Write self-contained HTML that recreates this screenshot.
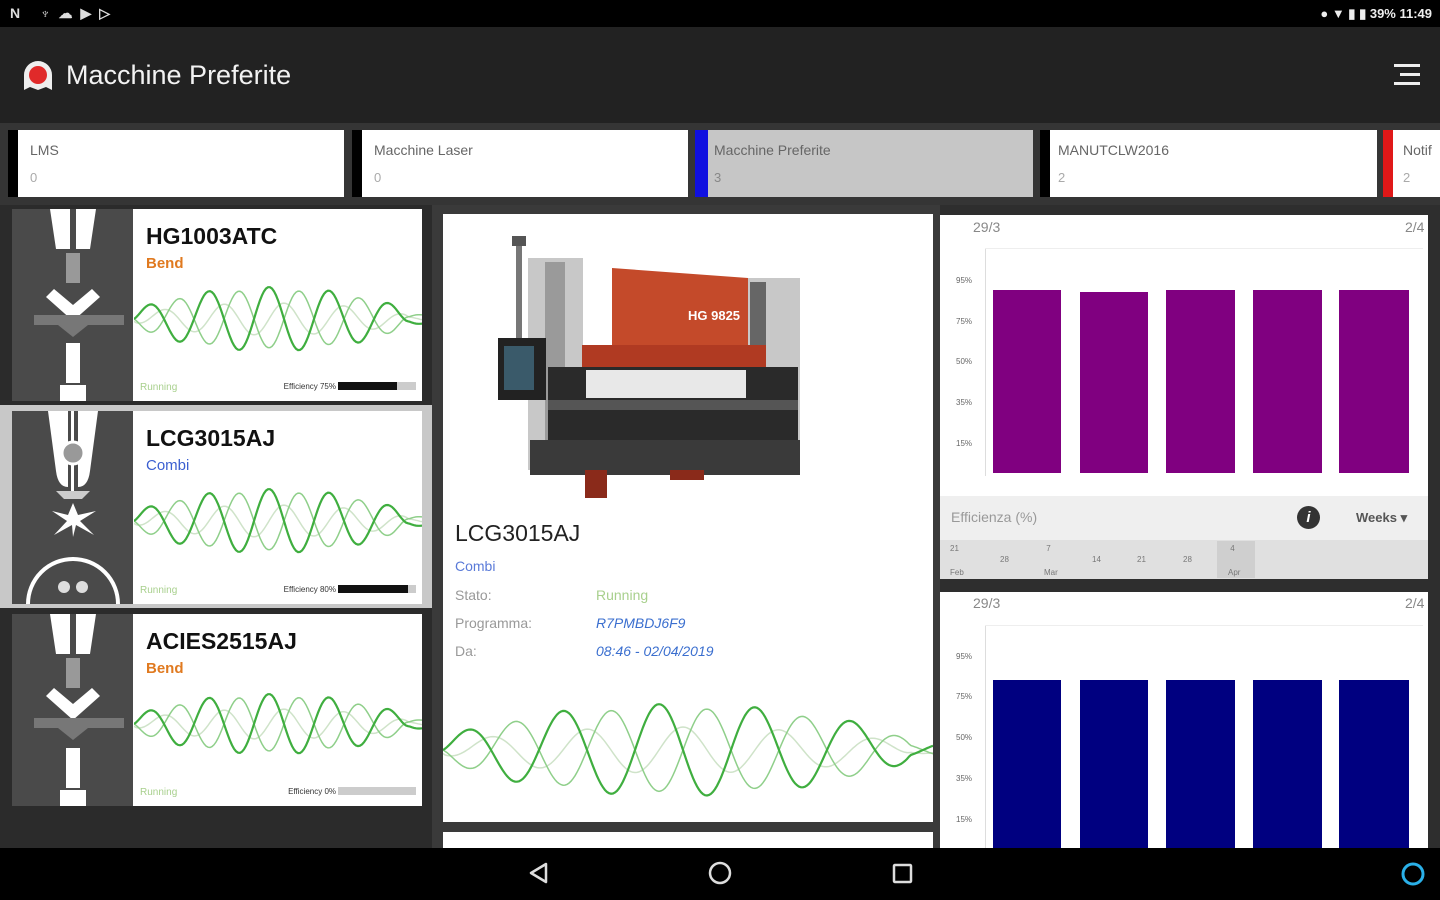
<!DOCTYPE html>
<html><head><meta charset="utf-8"><style>
*{margin:0;padding:0;box-sizing:border-box}
body{width:1440px;height:900px;background:#2e2e2e;font-family:"Liberation Sans",sans-serif;position:relative;overflow:hidden}
.abs{position:absolute}
.tab{position:absolute;top:130px;height:67px;background:#fff;border-left:10px solid #000}
.tab .t{position:absolute;left:12px;top:12px;font-size:14px;color:#666}
.tab .n{position:absolute;left:12px;top:40px;font-size:13px;color:#aaa}
.card{position:absolute;left:12px;width:410px;background:#fff}
.card .ic{position:absolute;left:0;top:0;width:121px;height:100%;background:#4a4a4a}
.card .nm{position:absolute;left:134px;top:14px;font-size:23px;font-weight:bold;color:#111}
.card .ty{position:absolute;left:134px;top:46px;font-size:15px;font-weight:bold}
.card .run{position:absolute;left:128px;bottom:8px;font-size:10px;color:#a8d08d}
.card .eff{position:absolute;right:86px;bottom:10px;font-size:8px;color:#333}
.card .bar{position:absolute;right:6px;bottom:11px;width:78px;height:8px;background:#ccc}
.card .bar i{display:block;height:100%;background:#111}
.lbl{position:absolute;left:455px;font-size:14px;color:#999}
.val{position:absolute;left:596px;font-size:14px;font-style:italic;color:#3b6fcf}
.yl{position:absolute;font-size:8px;color:#666}
</style></head><body>
<!-- status bar -->
<div class="abs" style="left:0;top:0;width:1440px;height:27px;background:#000"></div>
<div class="abs" style="left:10px;top:5px;color:#ddd;font-size:14px;font-weight:bold;letter-spacing:8px">N ♆☁▶▷</div>
<div class="abs" style="right:8px;top:6px;color:#eee;font-size:13px;font-weight:bold">● ▼ ▮ ▮ 39% 11:49</div>
<!-- toolbar -->
<div class="abs" style="left:0;top:27px;width:1440px;height:96px;background:#222"></div>
<svg class="abs" style="left:22px;top:60px" width="32" height="32" viewBox="0 0 32 32"><path d="M2 30 L2 15 A14 14 0 0 1 30 15 L30 30 L24 27 L16 30 L8 27 Z" fill="#eee"/><circle cx="16" cy="15" r="9" fill="#e02a2a"/></svg>
<div class="abs" style="left:66px;top:60px;color:#f2f2f2;font-size:27px">Macchine Preferite</div>
<div class="abs" style="left:1394px;top:64px;width:26px;height:3px;background:#eee"></div>
<div class="abs" style="left:1400px;top:73px;width:20px;height:3px;background:#eee"></div>
<div class="abs" style="left:1394px;top:82px;width:26px;height:3px;background:#eee"></div>
<!-- tab strip -->
<div class="abs" style="left:0;top:123px;width:1440px;height:82px;background:#353535"></div>
<div class="tab" style="left:8px;width:336px"><div class="t">LMS</div><div class="n">0</div></div>
<div class="tab" style="left:352px;width:336px"><div class="t">Macchine Laser</div><div class="n">0</div></div>
<div class="tab" style="left:695px;width:338px;background:#c6c6c6;border-left:13px solid #1010e0"><div class="t" style="left:6px">Macchine Preferite</div><div class="n" style="left:6px;color:#888">3</div></div>
<div class="tab" style="left:1040px;width:337px"><div class="t" style="left:8px">MANUTCLW2016</div><div class="n" style="left:8px">2</div></div>
<div class="tab" style="left:1383px;width:60px;border-left:10px solid #e01818"><div class="t" style="left:10px">Notif</div><div class="n" style="left:10px">2</div></div>
<!-- left list -->
<div class="abs" style="left:0;top:205px;width:432px;height:643px;background:#2b2b2b"></div>
<div class="abs" style="left:0;top:405px;width:432px;height:203px;background:#c8c8c8"></div>

<div class="card" style="top:209px;height:192px">
 <div class="ic"><svg width="121" height="192" viewBox="0 0 121 192">
  <path d="M38 0 H58 V40 H44 Z M64 0 H84 L78 40 H64 Z" fill="#fff"/>
  <rect x="54" y="44" width="14" height="30" fill="#999"/>
  <path d="M42 80 L61 96 L80 80 L88 88 L61 112 L34 88 Z" fill="#fff"/>
  <rect x="22" y="106" width="90" height="10" fill="#777"/>
  <path d="M46 116 L61 128 L76 116 Z" fill="#777"/>
  <rect x="54" y="134" width="14" height="40" fill="#fff"/>
  <rect x="48" y="176" width="26" height="16" fill="#fff"/>
 </svg></div>
 <div class="nm">HG1003ATC</div><div class="ty" style="color:#e07a20">Bend</div>
 <svg class="abs w" style="left:122px;top:60px" width="288" height="100" data-c="50" data-a="32" data-p="60"></svg>
 <div class="run">Running</div><div class="eff">Efficiency 75%</div><div class="bar"><i style="width:75%"></i></div>
</div>

<div class="card" style="top:411px;height:193px">
 <div class="ic"><svg width="121" height="193" viewBox="0 0 121 193">
  <path d="M36 0 H56 V76 Q46 76 44 60 Z M66 0 H86 L78 60 Q76 76 66 76 Z" fill="#fff"/>
  <rect x="59" y="0" width="3" height="80" fill="#fff"/>
  <circle cx="61" cy="42" r="11" fill="#999" stroke="#fff" stroke-width="3"/>
  <path d="M44 80 H78 L70 88 H52 Z" fill="#ccc"/>
  <path d="M61 92 L56 104 L40 100 L55 110 L42 124 L60 114 L61 126 L64 114 L82 124 L68 110 L84 100 L66 104 Z" fill="#fff"/>
  <path d="M16 193 A45 45 0 0 1 106 193" fill="none" stroke="#fff" stroke-width="4"/>
  <circle cx="52" cy="176" r="6" fill="#ddd"/><circle cx="70" cy="176" r="6" fill="#ddd"/>
 </svg></div>
 <div class="nm">LCG3015AJ</div><div class="ty" style="color:#3b5fd0;font-weight:normal">Combi</div>
 <svg class="abs w" style="left:122px;top:60px" width="288" height="100" data-c="50" data-a="32" data-p="60"></svg>
 <div class="run">Running</div><div class="eff">Efficiency 80%</div><div class="bar"><i style="width:90%"></i></div>
</div>

<div class="card" style="top:614px;height:192px">
 <div class="ic"><svg width="121" height="192" viewBox="0 0 121 192">
  <path d="M38 0 H58 V40 H44 Z M64 0 H84 L78 40 H64 Z" fill="#fff"/>
  <rect x="54" y="44" width="14" height="30" fill="#999"/>
  <path d="M42 74 L61 90 L80 74 L88 82 L61 106 L34 82 Z" fill="#fff"/>
  <rect x="22" y="104" width="90" height="10" fill="#777"/>
  <path d="M46 114 L61 126 L76 114 Z" fill="#777"/>
  <rect x="54" y="134" width="14" height="40" fill="#fff"/>
  <rect x="48" y="176" width="26" height="16" fill="#fff"/>
 </svg></div>
 <div class="nm">ACIES2515AJ</div><div class="ty" style="color:#e07a20">Bend</div>
 <svg class="abs w" style="left:122px;top:60px" width="288" height="100" data-c="50" data-a="30" data-p="60"></svg>
 <div class="run">Running</div><div class="eff">Efficiency 0%</div><div class="bar"><i style="width:0"></i></div>
</div>

<!-- middle -->
<div class="abs" style="left:432px;top:205px;width:508px;height:643px;background:#3a3a3a"></div>
<div class="abs" style="left:443px;top:214px;width:490px;height:608px;background:#fff"></div>
<div class="abs" style="left:443px;top:832px;width:490px;height:20px;background:#fff"></div>
<!-- machine -->
<svg class="abs" style="left:490px;top:230px" width="320" height="270" viewBox="490 230 320 270">
 <rect x="516" y="240" width="6" height="160" fill="#777"/>
 <rect x="512" y="236" width="14" height="10" fill="#555"/>
 <rect x="528" y="258" width="55" height="212" fill="#c8c8c8"/>
 <rect x="545" y="262" width="20" height="200" fill="#9a9a9a"/>
 <rect x="745" y="278" width="55" height="190" fill="#c8c8c8"/>
 <rect x="750" y="282" width="16" height="120" fill="#666"/>
 <path d="M612 268 L748 278 L748 345 L612 345 Z" fill="#c44a2a"/>
 <rect x="582" y="345" width="184" height="22" fill="#b03a22"/>
 <text x="688" y="320" font-size="13" font-weight="bold" fill="#fff" font-family="Liberation Sans">HG 9825</text>
 <rect x="548" y="367" width="250" height="100" fill="#2a2a2a"/>
 <rect x="586" y="370" width="160" height="28" fill="#e8e8e8"/>
 <rect x="548" y="400" width="250" height="10" fill="#555"/>
 <rect x="530" y="440" width="270" height="35" fill="#3a3a3a"/>
 <rect x="498" y="338" width="48" height="62" fill="#222"/>
 <rect x="504" y="346" width="30" height="44" fill="#3a5a6a"/>
 <rect x="585" y="470" width="22" height="28" fill="#8a2a1a"/>
 <rect x="670" y="470" width="34" height="10" fill="#8a2a1a"/>
</svg>
<div class="abs" style="left:455px;top:520px;font-size:23px;color:#222">LCG3015AJ</div>
<div class="abs" style="left:455px;top:558px;font-size:14px;color:#5a7ad8">Combi</div>
<div class="lbl" style="top:587px">Stato:</div><div class="val" style="top:587px;color:#a8d08d;font-style:normal">Running</div>
<div class="lbl" style="top:615px">Programma:</div><div class="val" style="top:615px">R7PMBDJ6F9</div>
<div class="lbl" style="top:643px">Da:</div><div class="val" style="top:643px">08:46 - 02/04/2019</div>
<svg class="abs w" style="left:443px;top:690px" width="490" height="120" data-c="60" data-a="46" data-p="96"></svg>

<!-- right charts -->
<div class="abs" style="left:940px;top:215px;width:488px;height:364px;background:#fff"></div>
<div class="abs" style="left:973px;top:219px;font-size:14px;color:#888">29/3</div>
<div class="abs" style="left:1405px;top:219px;font-size:14px;color:#888">2/4</div>
<div class="abs" style="left:985px;top:248px;width:1px;height:228px;background:#ddd"></div>
<div class="abs" style="left:985px;top:248px;width:438px;height:1px;background:#eee"></div>
<div class="yl" style="left:956px;top:276px">95%</div><div class="yl" style="left:956px;top:317px">75%</div><div class="yl" style="left:956px;top:357px">50%</div><div class="yl" style="left:956px;top:398px">35%</div><div class="yl" style="left:956px;top:439px">15%</div>
<div class="abs" style="left:993px;top:290px;width:68px;height:183px;background:#800080"></div>
<div class="abs" style="left:1080px;top:292px;width:68px;height:181px;background:#800080"></div>
<div class="abs" style="left:1166px;top:290px;width:69px;height:183px;background:#800080"></div>
<div class="abs" style="left:1253px;top:290px;width:69px;height:183px;background:#800080"></div>
<div class="abs" style="left:1339px;top:290px;width:70px;height:183px;background:#800080"></div>
<div class="abs" style="left:940px;top:496px;width:488px;height:44px;background:#efefef"></div>
<div class="abs" style="left:951px;top:509px;font-size:14px;color:#999">Efficienza (%)</div>
<div class="abs" style="left:1297px;top:506px;width:23px;height:23px;border-radius:50%;background:#333;color:#fff;font-size:15px;font-weight:bold;text-align:center;line-height:23px;font-style:italic">i</div>
<div class="abs" style="left:1356px;top:510px;font-size:13px;font-weight:bold;color:#555">Weeks ▾</div>
<div class="abs" style="left:940px;top:540px;width:488px;height:39px;background:#e0e0e0"></div>
<div class="abs" style="left:1217px;top:541px;width:38px;height:37px;background:#cfcfcf"></div>
<div class="abs" style="left:950px;top:543px;font-size:8px;color:#777;line-height:12px">21<br><br>Feb</div>
<div class="abs" style="left:1000px;top:555px;font-size:8px;color:#777">28</div>
<div class="abs" style="left:1044px;top:543px;font-size:8px;color:#777;line-height:12px">&nbsp;7<br><br>Mar</div>
<div class="abs" style="left:1092px;top:555px;font-size:8px;color:#777">14</div>
<div class="abs" style="left:1137px;top:555px;font-size:8px;color:#777">21</div>
<div class="abs" style="left:1183px;top:555px;font-size:8px;color:#777">28</div>
<div class="abs" style="left:1228px;top:543px;font-size:8px;color:#777;line-height:12px">&nbsp;4<br><br>Apr</div>

<div class="abs" style="left:940px;top:592px;width:488px;height:260px;background:#fff"></div>
<div class="abs" style="left:973px;top:595px;font-size:14px;color:#888">29/3</div>
<div class="abs" style="left:1405px;top:595px;font-size:14px;color:#888">2/4</div>
<div class="abs" style="left:985px;top:625px;width:1px;height:230px;background:#ddd"></div>
<div class="abs" style="left:985px;top:625px;width:438px;height:1px;background:#eee"></div>
<div class="yl" style="left:956px;top:652px">95%</div><div class="yl" style="left:956px;top:692px">75%</div><div class="yl" style="left:956px;top:733px">50%</div><div class="yl" style="left:956px;top:774px">35%</div><div class="yl" style="left:956px;top:815px">15%</div>
<div class="abs" style="left:993px;top:680px;width:68px;height:180px;background:#000080"></div>
<div class="abs" style="left:1080px;top:680px;width:68px;height:180px;background:#000080"></div>
<div class="abs" style="left:1166px;top:680px;width:69px;height:180px;background:#000080"></div>
<div class="abs" style="left:1253px;top:680px;width:69px;height:180px;background:#000080"></div>
<div class="abs" style="left:1339px;top:680px;width:70px;height:180px;background:#000080"></div>

<!-- nav bar -->
<div class="abs" style="left:0;top:848px;width:1440px;height:52px;background:#000"></div>
<svg class="abs" style="left:0;top:848px" width="1440" height="52">
 <path d="M546 16 L531 25 L546 34 Z" fill="none" stroke="#ddd" stroke-width="2.5" stroke-linejoin="round"/>
 <circle cx="720" cy="25" r="10" fill="none" stroke="#ddd" stroke-width="2.5"/>
 <rect x="894" y="17" width="17" height="17" rx="1" fill="none" stroke="#ddd" stroke-width="2.5"/>
 <circle cx="1413" cy="26" r="10" fill="none" stroke="#2ab0e8" stroke-width="3"/>
</svg>
<script>
document.querySelectorAll('svg.w').forEach(function(s){
 var W=+s.getAttribute('width'),c=+s.dataset.c,A=+s.dataset.a,P=+s.dataset.p;
 var ns='http://www.w3.org/2000/svg';
 function mk(off,col,sw,amp){var d='';for(var x=0;x<=W;x+=2){var t=x/W;var env=Math.pow(Math.sin(Math.PI*Math.min(1,Math.max(0,t*1.05))),0.6)*0.85+0.15;var y=c-amp*env*Math.sin(2*Math.PI*(x-off)/P);d+=(x?'L':'M')+x+' '+y.toFixed(1)}var p=document.createElementNS(ns,'path');p.setAttribute('d',d);p.setAttribute('fill','none');p.setAttribute('stroke',col);p.setAttribute('stroke-width',sw);s.appendChild(p)}
 mk(P*0.25,'#cfe3c9',1.5,A*0.5);mk(P*0.5,'#8fcf8a',1.5,A*0.9);mk(0,'#3fae3f',2.2,A);
});
</script>
</body></html>
